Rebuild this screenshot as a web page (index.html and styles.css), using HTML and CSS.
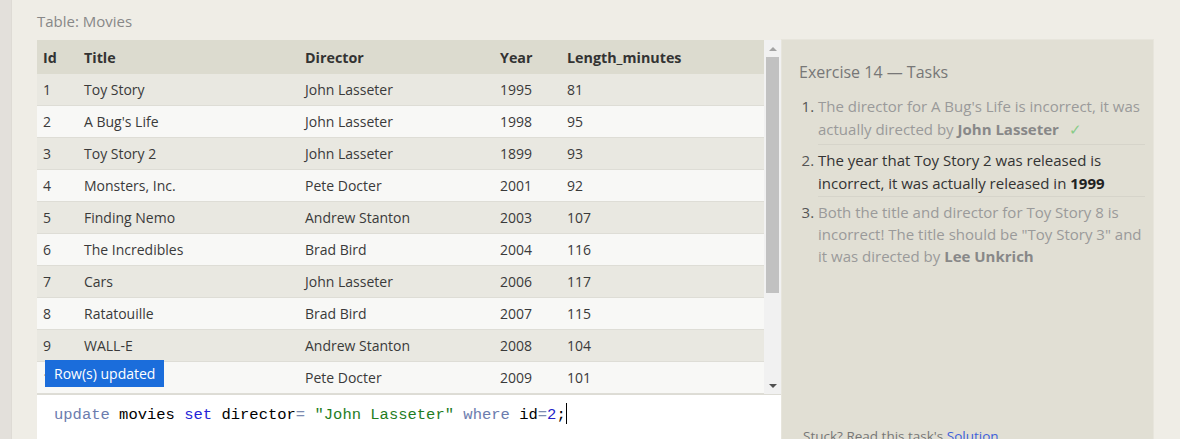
FILE: index.html
```html
<!DOCTYPE html>
<html>
<head>
<meta charset="utf-8">
<link rel="stylesheet" href="styles.css">
</head>
<body>
<div class="strip"></div>
<div class="main">
  <div class="caption">Table: Movies</div>
  <div class="cols">
    <div class="left">
      <div class="tablebox">
        <div class="tablewrap">
          <table class="movies">
            <colgroup><col class="c-id"><col class="c-title"><col class="c-dir"><col class="c-year"><col class="c-len"></colgroup>
            <thead><tr><th>Id</th><th>Title</th><th>Director</th><th>Year</th><th>Length_minutes</th></tr></thead>
            <tbody>
              <tr><td>1</td><td>Toy Story</td><td>John Lasseter</td><td>1995</td><td>81</td></tr>
              <tr><td>2</td><td>A Bug's Life</td><td>John Lasseter</td><td>1998</td><td>95</td></tr>
              <tr><td>3</td><td>Toy Story 2</td><td>John Lasseter</td><td>1899</td><td>93</td></tr>
              <tr><td>4</td><td>Monsters, Inc.</td><td>Pete Docter</td><td>2001</td><td>92</td></tr>
              <tr><td>5</td><td>Finding Nemo</td><td>Andrew Stanton</td><td>2003</td><td>107</td></tr>
              <tr><td>6</td><td>The Incredibles</td><td>Brad Bird</td><td>2004</td><td>116</td></tr>
              <tr><td>7</td><td>Cars</td><td>John Lasseter</td><td>2006</td><td>117</td></tr>
              <tr><td>8</td><td>Ratatouille</td><td>Brad Bird</td><td>2007</td><td>115</td></tr>
              <tr><td>9</td><td>WALL-E</td><td>Andrew Stanton</td><td>2008</td><td>104</td></tr>
              <tr><td>10</td><td>Up</td><td>Pete Docter</td><td>2009</td><td>101</td></tr>
            </tbody>
          </table>
        </div>
        <div class="scrollbar">
          <div class="sb-btn"><span class="arrow-up"></span></div>
          <div class="sb-track"><div class="sb-thumb"></div></div>
          <div class="sb-btn"><span class="arrow-down"></span></div>
        </div>
        <div class="toast">Row(s) updated</div>
      </div>
      <div class="editor"><span class="kw">update</span> movies <span class="kw2">set</span> director<span class="op">=</span> <span class="str">"John Lasseter"</span> <span class="kw">where</span> id<span class="op">=</span><span class="num">2</span>;<span class="cursor"></span></div>
    </div>
    <div class="tasks">
      <div class="tasks-title">Exercise 14 — Tasks</div>
      <ol class="task-list">
        <li class="done">The director for A Bug's Life is incorrect, it was actually directed by <b>John Lasseter</b> <span class="check">✓</span></li>
        <li class="current">The year that Toy Story 2 was released is incorrect, it was actually released in <b>1999</b></li>
        <li class="todo">Both the title and director for Toy Story 8 is incorrect! The title should be "Toy Story 3" and it was directed by <b>Lee Unkrich</b></li>
      </ol>
      <div class="stuck">Stuck? Read this task's <a href="#">Solution</a></div>
    </div>
  </div>
</div>
</body>
</html>
```
FILE: styles.css
```css
html, body {
  margin: 0;
  padding: 0;
  height: 439px;
  overflow: hidden;
}
body {
  background: #efede6;
  font-family: "Open Sans", "Liberation Sans", sans-serif;
  color: #333;
  display: flex;
}
.strip {
  width: 11px;
  flex: none;
  background: #e3e0db;
  border-right: 1px solid #dedbd5;
}
.main {
  padding-left: 25px;
  flex: 1;
}
.caption {
  color: #888;
  font-size: 15px;
  line-height: 20px;
  padding-top: 11px;
  height: 28px;
}
.cols {
  display: flex;
  align-items: flex-start;
}
.left {
  width: 744px;
  flex: none;
  margin-top: 1px;
}
.tablebox {
  position: relative;
  display: flex;
  height: 354px;
  border-bottom: 1px solid #dddcd5;
}
.tablewrap {
  width: 727px;
  height: 354px;
  overflow: hidden;
}
.movies {
  width: 727px;
  border-collapse: collapse;
  table-layout: fixed;
  font-size: 14px;
}
.c-id { width: 41px; }
.c-title { width: 221px; }
.c-dir { width: 195px; }
.c-year { width: 67px; }
.c-len { width: 203px; }
.movies th {
  background: #dcdbcf;
  text-align: left;
  font-weight: 700;
  font-size: 14.3px;
  height: 34px;
  padding: 0 0 0 6px;
  color: #333;
}
.movies td {
  height: 31px;
  padding: 0 0 0 6px;
  border-bottom: 1px solid #deddd6;
  color: #3a3a3a;
}
.movies tbody tr:nth-child(odd) td { background: #e9e8e1; }
.movies tbody tr:nth-child(even) td { background: #f8f8f6; }
.scrollbar {
  width: 17px;
  flex: none;
  background: #f1f1f1;
  display: flex;
  flex-direction: column;
}
.sb-btn {
  height: 17px;
  display: flex;
  align-items: center;
  justify-content: center;
}
.arrow-up {
  width: 0; height: 0;
  border-left: 4px solid transparent;
  border-right: 4px solid transparent;
  border-bottom: 4px solid #a3a3a3;
}
.arrow-down {
  width: 0; height: 0;
  border-left: 4px solid transparent;
  border-right: 4px solid transparent;
  border-top: 4px solid #505050;
}
.sb-track {
  flex: 1;
  padding: 0 2px;
}
.sb-thumb {
  height: 236px;
  background: #c1c1c1;
}
.toast {
  position: absolute;
  left: 8px;
  top: 320px;
  width: 119px;
  height: 27px;
  box-sizing: border-box;
  background: #1b6ddb;
  color: #fff;
  font-size: 14px;
  line-height: 27px;
  padding-left: 9px;
}
.editor {
  background: #fff;
  height: 60px;
  padding: 8px 0 0 17px;
  font-family: "Liberation Mono", "DejaVu Sans Mono", monospace;
  font-size: 15.5px;
  line-height: 22px;
  color: #000;
  white-space: pre;
}
.kw { color: #6c7cae; }
.kw2 { color: #2323d8; }
.op { color: #7d8bb0; }
.str { color: #1f7d1f; }
.num { color: #2222c8; }
.cursor {
  display: inline-block;
  width: 1px;
  height: 21px;
  background: #000;
  vertical-align: -5px;
}
.tasks {
  width: 373px;
  flex: none;
  box-sizing: border-box;
  background: #e1dfd4;
  border: 1px solid #e7e5dc;
  border-bottom: none;
  height: 411px;
  display: flex;
  flex-direction: column;
  padding: 20px 8px 0 17px;
}
.tasks-title {
  color: #777;
  font-size: 16px;
  line-height: 24px;
}
.task-list {
  margin: 8px 0 0 0;
  padding: 0 0 0 19px;
  font-size: 15px;
  line-height: 23px;
}
.task-list li {
  padding: 3px 0 3px 0;
  border-bottom: 1px solid #d6d4ca;
}
.task-list li.current { padding-top: 4px; padding-bottom: 1px; }
.task-list li.todo { line-height: 22px; padding-top: 4px; }
.task-list li:last-child { border-bottom: none; }
.task-list li::marker { color: #555; font-weight: 400; }
.done { color: #9a9a9a; }
.done b { color: #888; }
.current { color: #333; }
.current b { color: #222; }
.todo { color: #9a9a9a; }
.todo::marker { color: #999; }
.todo b { color: #888; }
.check {
  color: #88cc88;
  margin-left: 6px;
}
.stuck {
  margin-top: auto;
  color: #777;
  font-size: 13.5px;
  line-height: 20px;
  padding: 0 0 4px 4px;
}
.stuck a {
  color: #3d5fdb;
  text-decoration: none;
}
```
